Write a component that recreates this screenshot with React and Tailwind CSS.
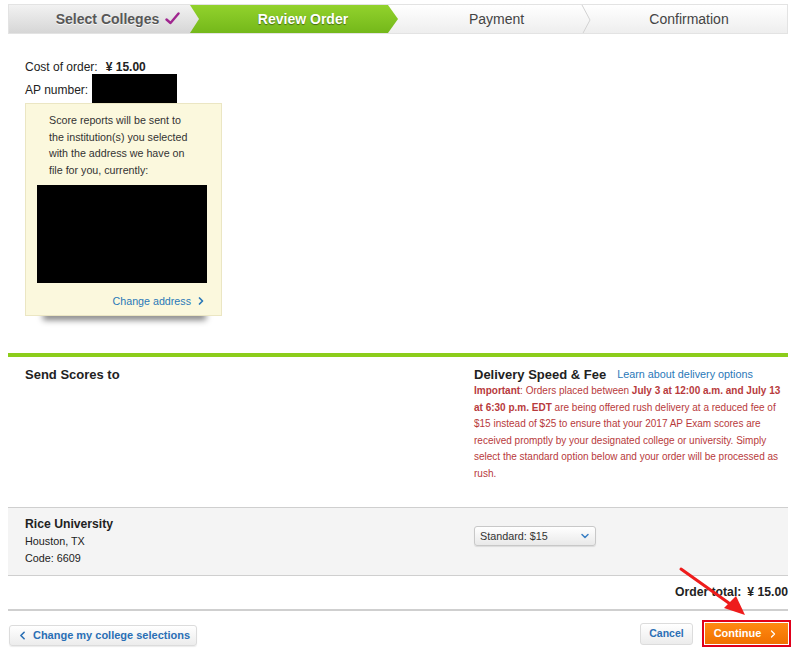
import { ChevronLeft, ChevronRight, ChevronDown } from 'lucide-react'

function Stepper() {
  return (
    <div className="relative flex h-[30px] w-[780px] overflow-hidden border border-[#e3e3e3] bg-gradient-to-b from-white to-[#eeeeee]">
      <div className="relative z-20 flex w-[190px] shrink-0 items-center justify-center gap-[6px] bg-gradient-to-b from-[#f2f2f2] to-[#d6d6d6] pl-[28px] [clip-path:polygon(0_0,calc(100%_-_9px)_0,100%_50%,calc(100%_-_9px)_100%,0_100%)]">
        <span className="text-[14px] font-bold text-[#575757] [text-shadow:0_1px_0_rgba(255,255,255,0.8)]">Select Colleges</span>
        <svg width="15" height="13" viewBox="0 0 15 13" className="mt-[-2px]">
          <path d="M1.5 7.5 L5.5 11 L13.5 1.5" fill="none" stroke="#a0268f" strokeWidth="2.4" strokeLinecap="round" strokeLinejoin="round" />
        </svg>
      </div>
      <div className="relative z-10 ml-[-9px] flex w-[208px] shrink-0 items-center justify-center bg-gradient-to-b from-[#92d22c] to-[#74b81a] pl-[18px] [clip-path:polygon(0_0,calc(100%_-_10px)_0,100%_50%,calc(100%_-_10px)_100%,0_100%)]">
        <span className="text-[14px] font-bold text-white [text-shadow:0_1px_1px_rgba(0,0,0,0.45)]">Review Order</span>
      </div>
      <div className="relative ml-[-10px] flex w-[203px] shrink-0 items-center justify-center pl-[14px]">
        <span className="text-[14px] text-[#444]">Payment</span>
        <svg width="10" height="30" viewBox="0 0 10 30" className="absolute right-0 top-0">
          <path d="M1 0 L9 15 L1 30" fill="none" stroke="#d2d2d2" strokeWidth="1" />
        </svg>
      </div>
      <div className="flex flex-1 items-center justify-center">
        <span className="text-[14px] text-[#444]">Confirmation</span>
      </div>
    </div>
  )
}

export default function App() {
  return (
    <div className="relative h-[649px] w-[799px] overflow-hidden bg-white font-['Liberation_Sans',Arial,sans-serif] text-[#222]">
      <div className="ml-[8px] w-[780px] pt-[4px]">
        <Stepper />

        {/* order summary */}
        <div className="pl-[17px]">
          <div className="mt-[25px] flex h-[15px] items-center text-[12px]">
            <span>Cost of order:</span>
            <span className="ml-[8px] font-bold">¥ 15.00</span>
          </div>
          <div className="flex h-[29px] items-end">
            <span className="pb-[4px] text-[12px]">AP number:</span>
            <div className="ml-[4px] h-[29px] w-[85px] bg-black" />
          </div>

          <div className="relative w-[197px]">
            <div className="relative z-10 h-[213px] border border-[#ebe6c3] bg-[#fbf8dd] px-[11px] pt-[8px]">
              <p className="whitespace-nowrap pl-[12px] text-[10.7px] leading-[16.5px] text-[#333]">
                Score reports will be sent to<br />
                the institution(s) you selected<br />
                with the address we have on<br />
                file for you, currently:
              </p>
              <div className="mt-[7px] h-[98px] w-[170px] bg-black" />
              <div className="mt-[10px] flex w-[170px] items-center justify-end gap-[4px] text-[10.7px] text-[#2a78b8]">
                <span>Change address</span>
                <ChevronRight size={12} strokeWidth={3.5} />
              </div>
            </div>
            <div className="absolute bottom-[-4px] left-[18px] right-[16px] h-[8px] bg-black/50 blur-[3px]" />
          </div>
        </div>

        {/* delivery section */}
        <div className="mt-[37px] h-[4px] bg-[#8ccd1b]" />
        <div className="flex h-[150px] pt-[9px]">
          <div className="w-[466px] shrink-0 pl-[17px] text-[13px] font-bold leading-[17px] text-[#222]">Send Scores to</div>
          <div className="flex-1">
            <div className="flex h-[17px] items-center">
              <span className="text-[13px] font-bold">Delivery Speed &amp; Fee</span>
              <span className="ml-[11px] text-[10.8px] text-[#2a78b8]">Learn about delivery options</span>
            </div>
            <div className="whitespace-nowrap text-[10px] leading-[16.6px] text-[#b83a3c]">
              <div><span className="font-bold">Important</span>: Orders placed between <span className="font-bold">July 3 at 12:00 a.m. and July 13</span></div>
              <div><span className="font-bold">at 6:30 p.m. EDT</span> are being offered rush delivery at a reduced fee of</div>
              <div>$15 instead of $25 to ensure that your 2017 AP Exam scores are</div>
              <div>received promptly by your designated college or university. Simply</div>
              <div>select the standard option below and your order will be processed as</div>
              <div>rush.</div>
            </div>
          </div>
        </div>

        {/* college row */}
        <div className="flex h-[69px] border-y border-[#cfcfcf] bg-[#f4f4f4]">
          <div className="w-[466px] shrink-0 pl-[17px] pt-[8px] text-[10.8px] leading-[17px]">
            <div className="text-[12.2px] font-bold">Rice University</div>
            <div>Houston, TX</div>
            <div>Code: 6609</div>
          </div>
          <div className="pt-[18px]">
            <div className="flex h-[20px] w-[122px] items-center justify-between rounded-[3px] border border-[#c8c8c8] bg-gradient-to-b from-white to-[#e9e9e9] pl-[5px] pr-[4px] text-[10.8px] text-[#333] shadow-[0_1px_1px_rgba(0,0,0,0.1)]">
              <span>Standard: $15</span>
              <ChevronDown size={12} strokeWidth={3} className="text-[#3a7fc4]" />
            </div>
          </div>
        </div>

        {/* total */}
        <div className="flex h-[33px] items-center justify-end text-[12.2px] font-bold">
          <span>Order total:</span>
          <span className="ml-[6px]">¥ 15.00</span>
        </div>
        <div className="h-[2px] bg-[#cfcfcf]" />

        {/* buttons */}
        <div className="flex items-center justify-between pt-[9px]">
          <div className="ml-[1px] mt-[4px] flex h-[21px] w-[188px] items-center justify-center gap-[4px] whitespace-nowrap rounded-[3px] border border-[#dcdcdc] bg-gradient-to-b from-white to-[#ececec] text-[11px] font-bold text-[#2a6fb5] shadow-[0_1px_1px_rgba(0,0,0,0.08)]">
            <ChevronLeft size={13} strokeWidth={3} />
            <span>Change my college selections</span>
          </div>
          <div className="mr-[-3px] flex items-center gap-[9px]">
            <div className="flex h-[22px] w-[53px] items-center justify-center rounded-[3px] border border-[#dcdcdc] bg-gradient-to-b from-white to-[#ececec] text-[10.5px] font-bold text-[#2a6fb5]">
              Cancel
            </div>
            <div className="border-2 border-[#e0001b] p-[1px]">
              <div className="flex h-[21px] w-[83px] items-center justify-center gap-[6px] bg-gradient-to-b from-[#ff8a12] to-[#f07000] text-[11px] font-bold text-white">
                <span>Continue</span>
                <ChevronRight size={12} strokeWidth={2.5} />
              </div>
            </div>
          </div>
        </div>
      </div>

      {/* annotation arrow */}
      <svg className="pointer-events-none absolute left-0 top-0" width="799" height="649" viewBox="0 0 799 649">
        <line x1="681" y1="569" x2="733" y2="606" stroke="#ee1c1c" strokeWidth="3" strokeLinecap="round" />
        <polygon points="745,615 724,608 736,596" fill="#ee1c1c" />
      </svg>
    </div>
  )
}
